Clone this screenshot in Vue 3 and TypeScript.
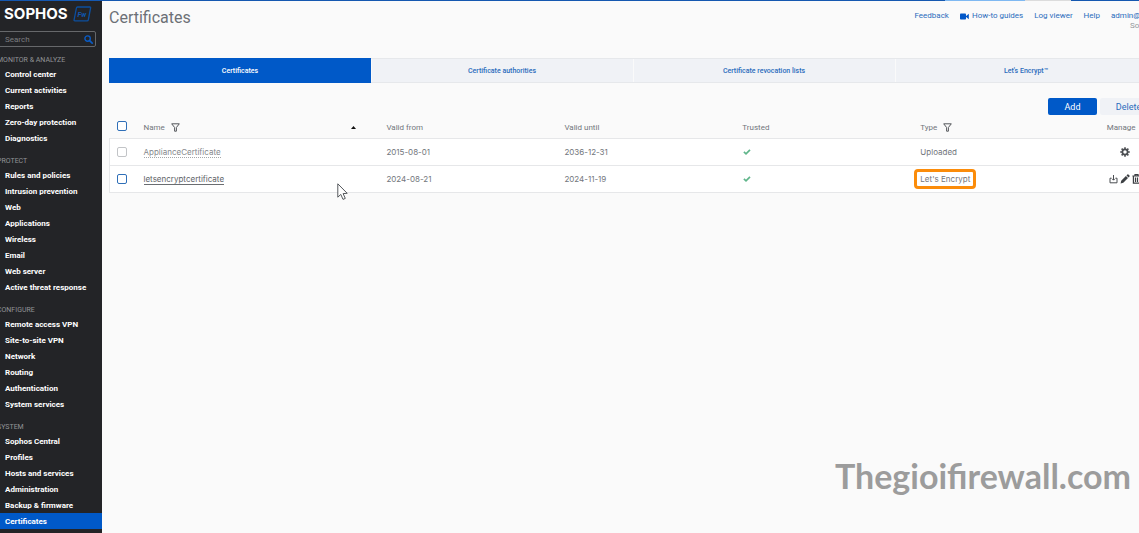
<script setup lang="ts">
import { ref } from 'vue'

interface NavGroup {
  title: string
  items: string[]
}

interface Certificate {
  name: string
  from: string
  until: string
  type: string
  builtIn: boolean
}

const groups: NavGroup[] = [
  {
    title: 'MONITOR & ANALYZE',
    items: ['Control center', 'Current activities', 'Reports', 'Zero-day protection', 'Diagnostics'],
  },
  {
    title: 'PROTECT',
    items: [
      'Rules and policies',
      'Intrusion prevention',
      'Web',
      'Applications',
      'Wireless',
      'Email',
      'Web server',
      'Active threat response',
    ],
  },
  {
    title: 'CONFIGURE',
    items: ['Remote access VPN', 'Site-to-site VPN', 'Network', 'Routing', 'Authentication', 'System services'],
  },
  {
    title: 'SYSTEM',
    items: [
      'Sophos Central',
      'Profiles',
      'Hosts and services',
      'Administration',
      'Backup & firmware',
      'Certificates',
    ],
  },
]

const tabs: string[] = ['Certificates', 'Certificate authorities', 'Certificate revocation lists', "Let's Encrypt™"]

const certificates: Certificate[] = [
  { name: 'ApplianceCertificate', from: '2015-08-01', until: '2036-12-31', type: 'Uploaded', builtIn: true },
  { name: 'letsencryptcertificate', from: '2024-08-21', until: '2024-11-19', type: "Let's Encrypt", builtIn: false },
]

const activeItem = ref('Certificates')
const activeTab = ref('Certificates')
const query = ref('')
</script>

<template>
  <div class="page">
    <div class="stripe"></div>
    <div class="layout">
      <aside class="sidebar">
        <div class="brand">
          <span class="brand-name">SOPHOS</span>
          <svg class="brand-badge" width="19" height="16" viewBox="0 0 19 16" aria-label="Firewall">
            <path d="M4.6 1h12.2q1 0 .8 1l-2.3 11.8q-.2 1-1.2 1H1.9q-1 0-.8-1L3.4 2q.2-1 1.2-1Z" fill="none" stroke="#0c4f9f" stroke-width="1.3" />
            <text x="4.5" y="10.5" font-size="7" font-weight="700" font-style="italic" fill="#0f58b0">Fw</text>
          </svg>
        </div>
        <label class="search">
          <input v-model="query" type="text" placeholder="Search" aria-label="Search" />
          <svg width="9" height="9" viewBox="0 0 9 9">
            <circle cx="3.6" cy="3.6" r="2.7" fill="none" stroke="#0a5bc4" stroke-width="1.4" />
            <path d="M5.6 5.6 8.2 8.2" stroke="#0a5bc4" stroke-width="1.7" stroke-linecap="round" />
          </svg>
        </label>
        <nav>
          <section v-for="group in groups" :key="group.title" class="group">
            <h2>{{ group.title }}</h2>
            <a
              v-for="item in group.items"
              :key="item"
              href="#"
              :class="{ active: item === activeItem }"
              @click.prevent="activeItem = item"
              >{{ item }}</a
            >
          </section>
        </nav>
      </aside>

      <main class="main">
        <div class="content">
          <header class="top">
            <h1>Certificates</h1>
            <div class="account">
              <div class="links">
                <a href="#">Feedback</a>
                <a href="#" class="guides">
                  <svg width="9" height="7" viewBox="0 0 9 7">
                    <rect x="0" y="0.5" width="6" height="6" rx="0.8" fill="#0057c8" />
                    <path d="M5.5 3.5 8.8.8v5.4Z" fill="#0057c8" />
                  </svg>
                  How-to guides
                </a>
                <a href="#">Log viewer</a>
                <a href="#">Help</a>
                <a href="#" class="user">admin@</a>
              </div>
              <div class="company">Sophos</div>
            </div>
          </header>

          <div class="tabs" role="tablist">
            <button
              v-for="tab in tabs"
              :key="tab"
              type="button"
              role="tab"
              :aria-selected="tab === activeTab"
              :class="{ active: tab === activeTab }"
              @click="activeTab = tab"
            >
              {{ tab }}
            </button>
          </div>

          <div class="actions">
            <button type="button" class="add">Add</button>
            <button type="button" class="delete">Delete</button>
          </div>

          <table>
            <colgroup>
              <col class="c-check" />
              <col class="c-name" />
              <col class="c-col" />
              <col class="c-col" />
              <col class="c-col" />
              <col class="c-type" />
              <col />
            </colgroup>
            <thead>
              <tr>
                <th><input type="checkbox" aria-label="Select all" /></th>
                <th>
                  <div class="head">
                    Name
                    <svg width="9" height="9" viewBox="0 0 9 9">
                      <path d="M.7.8h7.6L5.4 4.5v3.7H3.6V4.5Z" fill="none" stroke="#55585c" stroke-width="1" stroke-linejoin="round" />
                    </svg>
                    <svg class="sort" width="5" height="3" viewBox="0 0 5 3"><path d="M0 3 2.5 0 5 3Z" fill="#111" /></svg>
                  </div>
                </th>
                <th>Valid from</th>
                <th>Valid until</th>
                <th>Trusted</th>
                <th>
                  <div class="head">
                    Type
                    <svg width="9" height="9" viewBox="0 0 9 9">
                      <path d="M.7.8h7.6L5.4 4.5v3.7H3.6V4.5Z" fill="none" stroke="#55585c" stroke-width="1" stroke-linejoin="round" />
                    </svg>
                  </div>
                </th>
                <th>Manage</th>
              </tr>
            </thead>
            <tbody>
              <tr v-for="cert in certificates" :key="cert.name">
                <td><input type="checkbox" :disabled="cert.builtIn" :aria-label="cert.name" /></td>
                <td><a href="#" class="cert" :class="{ muted: cert.builtIn }">{{ cert.name }}</a></td>
                <td>{{ cert.from }}</td>
                <td>{{ cert.until }}</td>
                <td>
                  <svg class="tick" width="8" height="6" viewBox="0 0 8 6" aria-label="Trusted">
                    <path d="M.9 2.9 3 4.8 7 .9" fill="none" stroke="#5fb58a" stroke-width="1.7" />
                  </svg>
                </td>
                <td><span :class="{ marked: !cert.builtIn }">{{ cert.type }}</span></td>
                <td>
                  <div class="manage">
                    <button v-if="cert.builtIn" type="button" class="gear" aria-label="Regenerate">
                      <svg width="10" height="10" viewBox="0 0 10 10">
                        <circle cx="5" cy="5" r="2.6" fill="none" stroke="#4b4e52" stroke-width="1.7" />
                        <path d="M5 .2v1.9M5 7.9v1.9M.2 5h1.9M7.9 5h1.9M1.6 1.6l1.3 1.3M7.1 7.1l1.3 1.3M8.4 1.6 7.1 2.9M2.9 7.1 1.6 8.4" stroke="#4b4e52" stroke-width="1.6" />
                      </svg>
                    </button>
                    <template v-else>
                      <button type="button" aria-label="Download">
                        <svg width="9" height="10" viewBox="0 0 9 10">
                          <path d="M2.5 4.2H1v4.600h7V4.200H6.500" fill="none" stroke="#4b4e52" stroke-width="1" />
                          <path d="M4.500 1v5M3 4.700l1.500 1.500L6 4.700" fill="none" stroke="#4b4e52" stroke-width="1" />
                        </svg>
                      </button>
                      <button type="button" aria-label="Edit">
                        <svg width="10" height="10" viewBox="0 0 10 10">
                          <path d="M.6 9.4 1.2 6.7 5.9 2l2.1 2.1-4.7 4.7ZM6.5 1.4 7.4.5q.5-.4 1 0l1.1 1.1q.4.5 0 1L8.6 3.5Z" fill="#3c3f43" />
                        </svg>
                      </button>
                      <button type="button" aria-label="Delete certificate">
                        <svg width="9" height="10" viewBox="0 0 9 10">
                          <path d="M.4 2h8.2M3 1.8V.7h3v1.1M1.4 2.2v7h6.2v-7M3.5 3.5v4.5M5.500 3.500v4.500" fill="none" stroke="#3c3f43" stroke-width="1.2" />
                        </svg>
                      </button>
                    </template>
                  </div>
                </td>
              </tr>
            </tbody>
          </table>
        </div>
      </main>
    </div>

    <svg class="pointer" width="11" height="18" viewBox="0 0 11 18">
      <path d="M.8.8v13.4l3-2.8 2.2 5 2.3-1-2.2-4.8 4.1-.3Z" fill="#fff" stroke="#55585c" stroke-width="1" stroke-linejoin="round" />
    </svg>
    <div class="watermark">Thegioifirewall.com</div>
  </div>
</template>

<style>
body {
  background: #fafafa;
}
</style>

<style scoped>
.page {
  position: relative;
  display: flex;
  flex-direction: column;
  min-height: 100vh;
  overflow: hidden;
  background: #fafafa;
  color: #72767c;
  font-family: Roboto, 'Liberation Sans', sans-serif;
  font-size: 8px;
  line-height: 10px;
}

.page * {
  box-sizing: border-box;
}

a {
  text-decoration: none;
}

button {
  border: 0;
  padding: 0;
  background: none;
  font: inherit;
  cursor: pointer;
}

svg {
  display: block;
  flex: none;
}

.stripe {
  height: 1px;
  background: linear-gradient(90deg, #1558b0 83%, #7fb9f2 83% 90%, #dcdcdc 90% 94%, #1558b0 94%);
}

.layout {
  display: flex;
  flex: 1;
}

.sidebar {
  flex: none;
  width: 102px;
  overflow: hidden;
  background: #232427;
  color: #fff;
}

.brand {
  display: flex;
  align-items: center;
  gap: 5px;
  height: 26px;
  padding-left: 4px;
}

.brand-name {
  font-family: Inter, sans-serif;
  font-size: 15px;
  font-weight: 700;
  line-height: 20px;
}

.search {
  display: flex;
  align-items: center;
  height: 16px;
  margin: 4px 6px 7px -2px;
  padding: 0 2px 0 6px;
  border: 1px solid #66686b;
  border-radius: 2px;
}

.search input {
  flex: 1;
  min-width: 0;
  padding: 2px 0 0;
  border: 0;
  outline: 0;
  background: none;
  color: #fff;
  font: inherit;
}

.search input::placeholder {
  color: #7b7d80;
  opacity: 1;
}

.group {
  margin-bottom: 9px;
}

.group h2 {
  margin: 0 0 0 -3px;
  color: #929497;
  font-size: 7px;
  font-weight: 400;
  line-height: 12px;
  white-space: nowrap;
}

.group a {
  display: block;
  padding: 2px 0 0 5px;
  color: #fff;
  font-size: 8px;
  font-weight: 700;
  line-height: 14px;
  white-space: nowrap;
}

.group a.active {
  background: #0059c8;
}

.main {
  flex: 1;
  min-width: 0;
  overflow: hidden;
  padding-left: 7px;
}

.content {
  margin-right: -18px;
}

.top {
  display: flex;
  justify-content: space-between;
  height: 57px;
  padding-top: 6px;
}

h1 {
  margin: 0;
  color: #6c7076;
  font-size: 16px;
  font-weight: 400;
  line-height: 22px;
}

.account {
  padding-top: 4px;
}

.links {
  display: flex;
  gap: 11px;
}

.links a {
  color: #2a6cbc;
}

.links .user {
  min-width: 46px;
}

.guides {
  display: flex;
  align-items: center;
  gap: 3px;
}

.company {
  color: #94979b;
  text-align: right;
}

.tabs {
  display: grid;
  grid-template-columns: repeat(4, 1fr);
  height: 25px;
  background: #f0f2f6;
}

.tabs button {
  border: solid #e6e8eb;
  border-width: 1px 0;
  box-shadow: inset 1px 0 #fafafa;
  color: #2a6cbc;
  font-size: 7px;
  font-weight: 500;
}

.tabs button.active {
  border-color: #0059c8;
  background: #0059c8;
  box-shadow: none;
  color: #fff;
}

.actions {
  display: flex;
  justify-content: flex-end;
  gap: 3px;
  padding-top: 15px;
}

.actions button {
  height: 17px;
  border-radius: 2px;
  font-size: 9px;
}

.actions .add {
  width: 49px;
  background: #0059c8;
  color: #fff;
}

.actions .delete {
  width: 57px;
  background: #f0f2f6;
  color: #2a6cbc;
}

table {
  width: 100%;
  border-collapse: collapse;
  table-layout: fixed;
}

.c-check {
  width: 34px;
}

.c-name {
  width: 23.2%;
}

.c-col {
  width: 17%;
}

.c-type {
  width: 17.8%;
}

th,
td {
  padding: 0;
  font-weight: 400;
  text-align: left;
  white-space: nowrap;
}

th {
  height: 23px;
  padding-top: 3px;
}

th:first-child {
  padding-top: 0;
}

td {
  height: 27px;
  font-family: Inter, sans-serif;
}

tbody tr {
  border: 1px solid #e6e7e9;
  background: #fff;
}

input[type='checkbox'] {
  display: block;
  width: 10px;
  height: 10px;
  margin: 0 0 0 7px;
  border: 1px solid #2f6fb8;
  border-radius: 2px;
  background: #fff;
  appearance: none;
}

input[type='checkbox']:disabled {
  border-color: #c2c4c7;
}

input[type='checkbox']:checked {
  background: #0059c8;
}

.head {
  display: flex;
  align-items: center;
  gap: 6px;
}

.head .sort {
  margin: 0 30px 0 auto;
}

.cert {
  border-bottom: 1px solid #6a6d71;
  color: #606367;
}

.cert.muted {
  border-bottom: 1px dotted #a5a7aa;
  color: #85888c;
}

.tick {
  margin-left: 1px;
}

.marked {
  display: inline-block;
  margin-left: -6px;
  padding: 2px 3px;
  border: 3px solid #fb8c0a;
  border-radius: 4px;
}

.manage {
  display: flex;
  gap: 2px;
  padding-left: 2px;
}

.manage .gear {
  margin-left: 11px;
}

.pointer {
  position: absolute;
  top: 183px;
  left: 337px;
}

.watermark {
  position: absolute;
  right: 8px;
  bottom: 42px;
  color: #9c9c9c;
  font-family: Lato, sans-serif;
  font-size: 34px;
  font-weight: 700;
  line-height: 40px;
}
</style>
